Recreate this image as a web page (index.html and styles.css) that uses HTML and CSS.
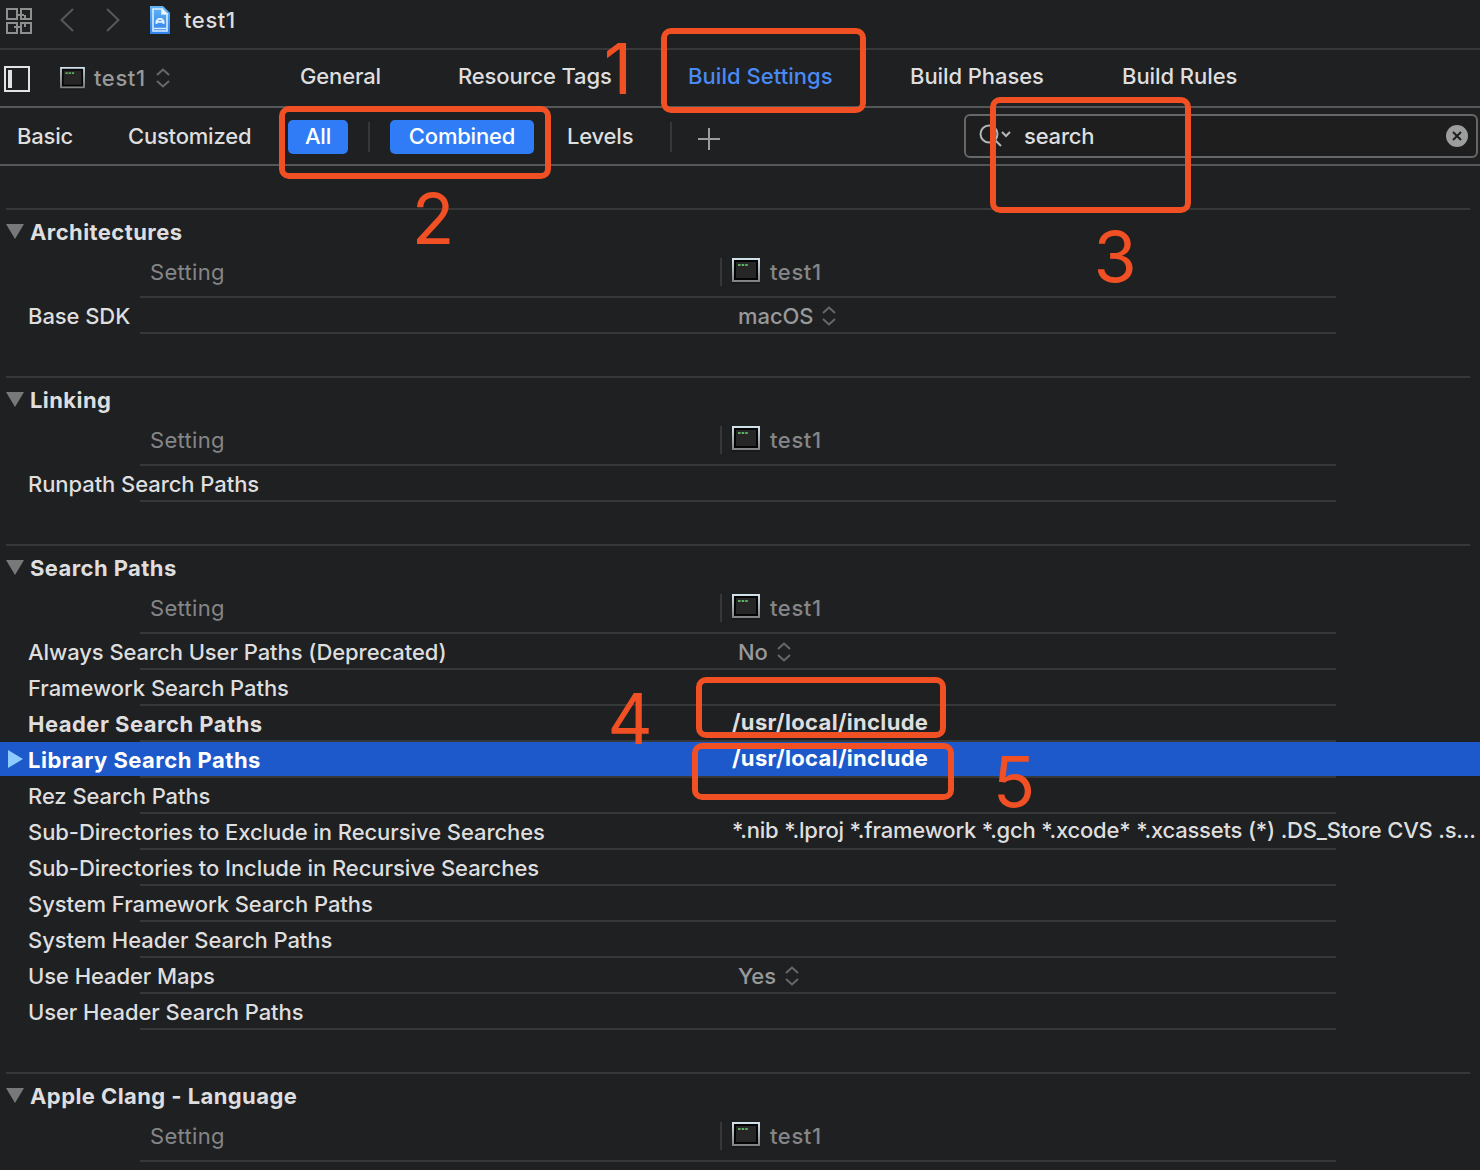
FILE: index.html
```html
<!DOCTYPE html>
<html lang="en">
<head>
<meta charset="utf-8">
<title>test1 — Build Settings</title>
<link rel="stylesheet" href="styles.css">
</head>
<body>
<svg class="defs" width="0" height="0" aria-hidden="true">
  <defs>
    <linearGradient id="frame" x1="0" y1="0" x2="0" y2="1"><stop offset="0" stop-color="#d3e4ee"/><stop offset="1" stop-color="#7d807f"/></linearGradient>
    <linearGradient id="paper" x1="0" y1="0" x2="0" y2="1"><stop offset="0" stop-color="#62b5f5"/><stop offset="1" stop-color="#2f80ee"/></linearGradient>
    <symbol id="terminal" viewBox="0 0 28 26">
      <path d="M0 24h28v2H0z" fill="#17191a"/>
      <path d="M0 0h28v24H0z" fill="url(#frame)"/>
      <path d="M2 2h24v20H2z" fill="#050505"/>
      <path d="M4 4h20v16H4z" fill="#262626"/>
      <path d="M6 7h10" stroke="#5fae5c" stroke-width="2" stroke-dasharray="2.6 1"/>
    </symbol>
    <symbol id="updown" viewBox="0 0 14 20">
      <path d="M1 7l6-5.500L13 7M1 13l6 5.500 6-5.500" fill="none" stroke="currentColor" stroke-width="2"/>
    </symbol>
  </defs>
</svg>
<div class="window">
  <header class="jumpbar">
    <svg class="related" width="26" height="26" viewBox="0 0 26 26"><g fill="none" stroke="#8e8f8f" stroke-width="2"><path d="M1 1h10v10H1zM15 1h10v10H15zM1 15h10v10H1zM15 15h10v10H15z"/><path d="M11 7h7M8 19h7M19 7v4M19 15v4"/></g></svg>
    <svg width="14" height="24" viewBox="0 0 14 24"><path d="M13 1L1.500 12 13 23" fill="none" stroke="#57585a" stroke-width="2"/></svg>
    <svg width="14" height="24" viewBox="0 0 14 24"><path d="M1 1l11.500 11L1 23" fill="none" stroke="#57585a" stroke-width="2"/></svg>
    <svg class="doc" width="20" height="28" viewBox="0 0 20 28"><path d="M0 0h13l7 7v21H0z" fill="url(#paper)"/><path d="M3 3h9v5h5v17H3zM4 22.500h12" fill="none" stroke="#d9ecff" stroke-width="1.600"/><path d="M12 2v6h6z" fill="#eaf5ff"/><path d="M6.500 18v-3l2-2h3l2 2v3M7 15.800h6" fill="none" stroke="#e6f3ff" stroke-width="1.800"/></svg>
    <span>test1</span>
  </header>
  <nav class="tabs">
    <svg class="pane" width="26" height="26" viewBox="0 0 26 26"><path d="M1 1h24v24H1z" fill="none" stroke="#e2e3e3" stroke-width="2"/><path d="M4 4h4v18H4z" fill="#e2e3e3"/></svg>
    <span class="target"><svg width="25" height="23"><use href="#terminal"/></svg><span>test1</span><svg width="14" height="20"><use href="#updown"/></svg></span>
    <span class="t-general">General</span>
    <span class="t-tags">Resource Tags</span>
    <span class="active t-settings">Build Settings</span>
    <span class="t-phases">Build Phases</span>
    <span class="t-rules">Build Rules</span>
  </nav>
  <div class="filters">
    <span>Basic</span>
    <span>Customized</span>
    <span class="pill">All</span>
    <i class="sep"></i>
    <span class="pill">Combined</span>
    <span>Levels</span>
    <i class="sep"></i>
    <svg class="plus" width="22" height="22" viewBox="0 0 22 22"><path d="M11 0v22M0 11h22" stroke="#9b9c9c" stroke-width="2"/></svg>
    <div class="search">
      <svg width="32" height="24" viewBox="0 0 32 24"><g fill="none" stroke="#b5b6b6" stroke-width="2"><circle cx="10" cy="10" r="8.500"/><path d="M16 16l6 6M23 8l4 4 4-4"/></g></svg>
      <span>search</span>
      <svg class="clear" width="22" height="22" viewBox="0 0 22 22"><circle cx="11" cy="11" r="11" fill="#9c9d9d"/><path d="M7 7l8 8M15 7l-8 8" stroke="#1e1e1e" stroke-width="2"/></svg>
    </div>
  </div>

  <main class="settings">
    <section>
      <h2>Architectures</h2>
      <div class="columns"><span>Setting</span><span class="scope"><svg width="28" height="26"><use href="#terminal"/></svg>test1</span></div>
      <div class="row"><span class="name">Base SDK</span><span class="choice">macOS<svg width="14" height="20"><use href="#updown"/></svg></span></div>
    </section>
    <section>
      <h2>Linking</h2>
      <div class="columns"><span>Setting</span><span class="scope"><svg width="28" height="26"><use href="#terminal"/></svg>test1</span></div>
      <div class="row"><span class="name">Runpath Search Paths</span></div>
    </section>
    <section>
      <h2>Search Paths</h2>
      <div class="columns"><span>Setting</span><span class="scope"><svg width="28" height="26"><use href="#terminal"/></svg>test1</span></div>
      <div class="row"><span class="name">Always Search User Paths (Deprecated)</span><span class="choice">No<svg width="14" height="20"><use href="#updown"/></svg></span></div>
      <div class="row"><span class="name">Framework Search Paths</span></div>
      <div class="row custom"><span class="name">Header Search Paths</span><span class="value">/usr/local/include</span></div>
      <div class="row custom selected"><span class="name">Library Search Paths</span><span class="value">/usr/local/include</span></div>
      <div class="row"><span class="name">Rez Search Paths</span></div>
      <div class="row"><span class="name">Sub-Directories to Exclude in Recursive Searches</span><span class="value list">*.nib *.lproj *.framework *.gch *.xcode* *.xcassets (*) .DS_Store CVS .s...</span></div>
      <div class="row"><span class="name">Sub-Directories to Include in Recursive Searches</span></div>
      <div class="row"><span class="name">System Framework Search Paths</span></div>
      <div class="row"><span class="name">System Header Search Paths</span></div>
      <div class="row"><span class="name">Use Header Maps</span><span class="choice">Yes<svg width="14" height="20"><use href="#updown"/></svg></span></div>
      <div class="row"><span class="name">User Header Search Paths</span></div>
    </section>
    <section>
      <h2>Apple Clang - Language</h2>
      <div class="columns"><span>Setting</span><span class="scope"><svg width="28" height="26"><use href="#terminal"/></svg>test1</span></div>
    </section>
  </main>

  <div class="mark box-1"></div><div class="digit digit-1">1</div>
  <div class="mark box-2"></div><div class="digit digit-2">2</div>
  <div class="mark box-3"></div><div class="digit digit-3">3</div>
  <div class="mark box-4"></div><div class="digit digit-4">4</div>
  <div class="mark box-5"></div><div class="digit digit-5">5</div>
</div>
</body>
</html>
```
FILE: styles.css
```css
* { box-sizing: border-box; }
body {
  margin: 0;
  background: #1f2022;
  color: #dededf;
  font: 500 22px/28px Inter, "Liberation Sans", sans-serif;
  letter-spacing: -0.07px;
  overflow: hidden;
}
svg { display: block; flex: none; }
.defs { position: absolute; }
.window { position: relative; width: 1480px; height: 1170px; overflow: hidden; white-space: nowrap; }

.jumpbar {
  display: grid;
  grid-template-columns: 54px 46px 44px 34px auto;
  align-items: start;
  height: 50px;
  padding: 6px 0 0 6px;
  border-bottom: 2px solid #37383a;
}
.jumpbar span { letter-spacing: 0.6px; }
.jumpbar svg { margin-top: 2px; }
.jumpbar .doc { margin-top: 0; }

.tabs {
  display: grid;
  grid-template-columns: 56px 240px 158px 230px 222px 212px auto;
  align-items: start;
  height: 58px;
  padding: 12px 0 0 4px;
  border-bottom: 2px solid #555657;
}
.pane { margin-top: 4px; }
.t-general, .t-tags { letter-spacing: -0.15px; }
.t-settings { letter-spacing: 0.05px; }
.active { color: #4a8af4; }
.target { display: flex; align-items: center; padding-top: 2px; color: #98999a; }
.target span { width: 62px; margin-left: 9px; letter-spacing: 0.6px; }

.filters {
  display: grid;
  grid-template-columns: 111px 160px 80px 22px 177px 103px 28px 266px 514px;
  align-items: start;
  height: 58px;
  padding: 6px 0 0 17px;
  border-bottom: 2px solid #555657;
  letter-spacing: -0.2px;
}
.filters > span { margin-top: 8px; }
.filters .pill {
  justify-self: start;
  width: 60px;
  height: 34px;
  margin-top: 6px;
  padding-top: 2px;
  border-radius: 5px;
  background: #2f7cf6;
  color: #fff;
  text-align: center;
}
.filters .sep + .pill { width: 144px; }
.sep { width: 2px; height: 30px; margin-top: 8px; background: #37383a; }
.plus { margin-top: 14px; }
.search {
  display: flex;
  align-items: center;
  height: 44px;
  padding: 0 8px 0 13px;
  border: 2px solid #666768;
  border-radius: 6px;
  background: #1e1e1e;
}
.search span { margin-left: 13px; }
.clear { margin-left: auto; }

.settings { padding-top: 42px; }
section { padding-bottom: 42px; }
h2 {
  display: flex;
  align-items: flex-start;
  height: 46px;
  margin: 0 10px 0 6px;
  padding-top: 8px;
  border-top: 2px solid #37383a;
  font-size: 22px;
  font-weight: 700;
  letter-spacing: 0.42px;
}
h2::before {
  content: "";
  width: 18px;
  height: 15px;
  margin: 6px 6px 0 0;
  background: #777879;
  clip-path: polygon(0 0, 100% 0, 50% 100%);
}
.columns {
  display: grid;
  grid-template-columns: 570px auto;
  height: 44px;
  width: 1196px;
  margin-left: 140px;
  padding: 4px 0 0 10px;
  border-bottom: 2px solid #37383a;
  color: #858687;
  font-weight: 400;
  letter-spacing: 0.3px;
}
.scope { display: flex; gap: 10px; height: 28px; padding-left: 10px; border-left: 2px solid #37383a; font-weight: 500; letter-spacing: 0.6px; }
.row {
  display: grid;
  grid-template-columns: 704px auto;
  height: 36px;
  padding: 4px 0 0 28px;
  background: linear-gradient(#37383a, #37383a) 140px 34px / 1196px 2px no-repeat;
}
.choice { display: flex; gap: 9px; padding-left: 6px; color: #98999a; }
.choice svg { margin-top: 4px; color: #67686a; }
.target svg { color: #67686a; }
.value { margin-top: -2px; }
.list { letter-spacing: -0.2px; }
.custom { font-weight: 700; letter-spacing: 0.49px; }
.custom .value { letter-spacing: 0.32px; }
.selected {
  position: relative;
  color: #fff;
  background: linear-gradient(#37383a, #37383a) 140px 34px / 1196px 2px no-repeat, linear-gradient(#1d59ca, #1d59ca) 0 0 / 100% 34px no-repeat;
}
.selected::before {
  content: "";
  position: absolute;
  left: 8px;
  top: 8px;
  width: 15px;
  height: 18px;
  background: #8ecbff;
  clip-path: polygon(0 0, 100% 50%, 0 100%);
}

.mark { position: absolute; border: 6px solid #f05023; border-radius: 10px; }
.box-1 { left: 661px; top: 28px; width: 205px; height: 85px; }
.box-2 { left: 279px; top: 106px; width: 272px; height: 73px; }
.box-3 { left: 990px; top: 97px; width: 201px; height: 116px; }
.box-4 { left: 696px; top: 677px; width: 250px; height: 61px; }
.box-5 { left: 692px; top: 743px; width: 262px; height: 57px; }
.digit {
  position: absolute;
  width: 60px;
  color: #f05023;
  font-size: 70px;
  font-weight: 400;
  line-height: 70px;
  letter-spacing: 0;
  text-align: center;
}
.digit-1 { left: 588px; top: 34px; }
.digit-2 { left: 403px; top: 184px; }
.digit-3 { left: 1085px; top: 222px; }
.digit-4 { left: 600px; top: 684px; }
.digit-5 { left: 984px; top: 747px; }
```
